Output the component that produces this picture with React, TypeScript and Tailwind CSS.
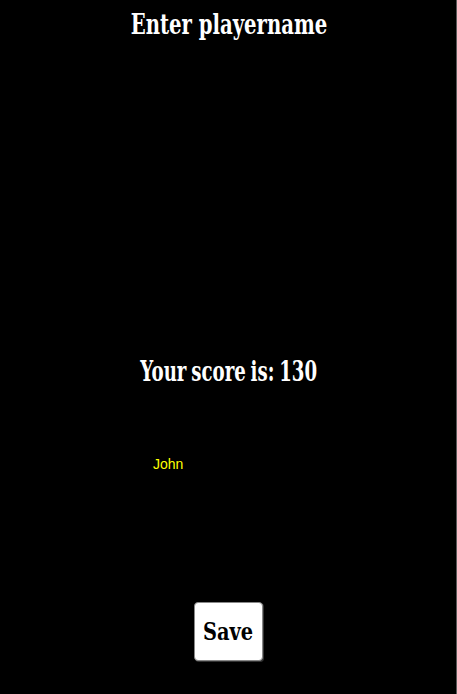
export default function App() {
  const serif = { fontFamily: '"DejaVu Serif Condensed", "DejaVu Serif", serif' };
  return (
    <div className="relative w-[457px] h-[694px] bg-black overflow-hidden">
      <div className="absolute right-0 top-0 w-px h-full bg-[#5a5a5a]" />
      <div className="flex flex-col items-center">
        <h1 className="mt-[8px] inline-block [transform:scaleX(0.78)] text-white font-bold text-[28px] leading-[34px] whitespace-nowrap" style={serif}>
          Enter playername
        </h1>
        <h2 className="mt-[313px] inline-block [transform:scaleX(0.72)] [word-spacing:-2px] text-white font-bold text-[28px] leading-[34px] whitespace-nowrap" style={serif}>
          Your score is: 130
        </h2>
        <div className="mt-[62px] w-full pl-[153px]">
          <span className="text-[#ffff00] text-[14px] leading-[16px]" style={{ fontFamily: '"Liberation Sans", Arial, sans-serif' }}>John</span>
        </div>
        <button
          className="mt-[127px] w-[69px] h-[59px] bg-white rounded-[4px] border border-[#888] shadow-[1px_1px_0_#333] text-black font-bold leading-none"
          style={serif}
        >
          <span className="inline-block [transform:scaleX(0.86)] text-[25px]">Save</span>
        </button>
      </div>
    </div>
  );
}
